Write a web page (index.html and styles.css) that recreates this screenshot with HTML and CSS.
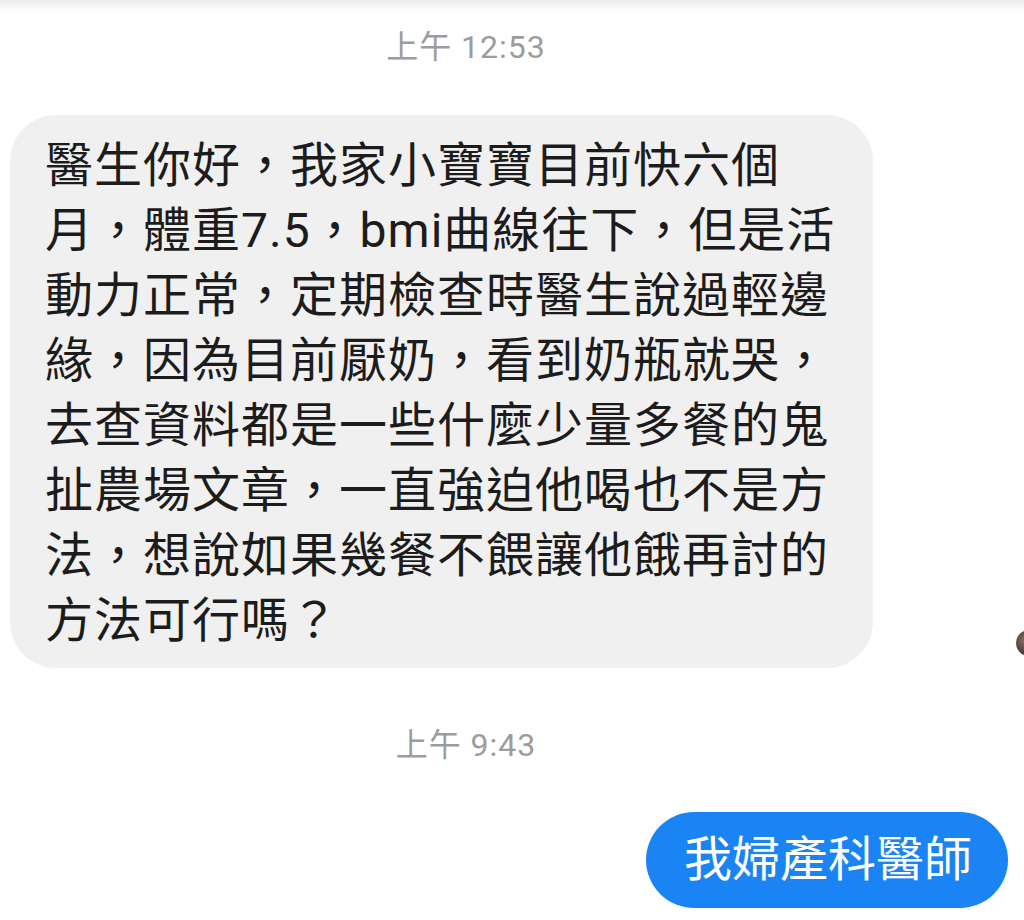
FILE: index.html
```html
<!DOCTYPE html>
<html lang="zh-Hant">
<head>
<meta charset="utf-8">
<title>Chat</title>
<link rel="stylesheet" href="styles.css">
</head>
<body>
<div class="chat">
  <div class="time">上午 12:53</div>
  <div class="row row-in">
    <div class="bubble bubble-in">醫生你好，我家小寶寶目前快六個月，體重7.5，bmi曲線往下，但是活動力正常，定期檢查時醫生說過輕邊緣，因為目前厭奶，看到奶瓶就哭，去查資料都是一些什麼少量多餐的鬼扯農場文章，一直強迫他喝也不是方法，想說如果幾餐不餵讓他餓再討的方法可行嗎？</div>
    <span class="seen"></span>
  </div>
  <div class="time time-2">上午 9:43</div>
  <div class="row row-out">
    <div class="bubble bubble-out">我婦產科醫師</div>
  </div>
</div>
</body>
</html>
```

FILE: styles.css
```css
html, body {
  margin: 0;
  padding: 0;
}
body {
  width: 1024px;
  height: 920px;
  overflow: hidden;
  background: linear-gradient(#ebebeb 0px, #fafafa 8px, #ffffff 14px) no-repeat;
  font-family: Roboto, "Noto Sans CJK TC", sans-serif;
}
.chat {
  display: flex;
  flex-direction: column;
}
.time {
  margin-top: 27px;
  height: 40px;
  line-height: 40px;
  padding-right: 92px;
  text-align: center;
  font-size: 32px;
  letter-spacing: 1px;
  color: #9c9c9c;
}
.time-2 {
  margin-top: 57px;
}
.row {
  display: flex;
  position: relative;
}
.row-in {
  margin-top: 48px;
  padding-left: 10px;
}
.row-out {
  margin-top: 47px;
  justify-content: flex-end;
  padding-right: 16px;
}
.bubble {
  font-size: 48px;
  line-height: 65px;
}
.bubble-in {
  box-sizing: border-box;
  width: 863px;
  padding: 18px 13px 15px 35px;
  background: #f0f0f0;
  color: #1c1c1c;
  border-radius: 46px;
  letter-spacing: 1px;
}
.bubble-out {
  background: #1b84f4;
  color: #ffffff;
  border-radius: 48px;
  padding: 15px 36px 16px 38px;
  letter-spacing: 0;
}
.seen {
  position: absolute;
  right: -18px;
  bottom: 12px;
  width: 26px;
  height: 26px;
  border-radius: 50%;
  background: radial-gradient(circle at 35% 40%, #8a6d66, #3b302e 70%);
}
```
